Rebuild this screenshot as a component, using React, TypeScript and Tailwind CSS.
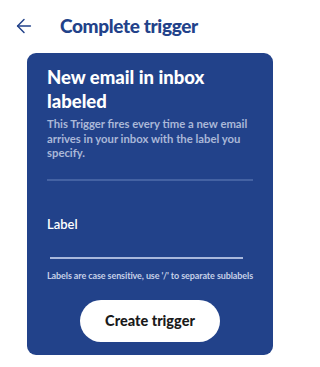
import { ArrowLeft } from "lucide-react";

const font = { fontFamily: "Lato, 'Open Sans', sans-serif" };

export default function App() {
  return (
    <div className="w-[300px] h-[367px] bg-white" style={font}>
      {/* header */}
      <div className="flex items-center h-[49px] pl-[13px] pt-[3px]">
        <ArrowLeft className="w-[22px] h-[22px] text-[#22428a]" strokeWidth={1.6} />
        <h1 className="ml-[25px] text-[19px] font-black text-[#22428a] tracking-[-0.35px]">
          Complete trigger
        </h1>
      </div>

      {/* card */}
      <div className="mx-[27px] mt-[4px] rounded-[9px] bg-[#22428a] px-[20px] pt-[12px] pb-[13px]">
        <h2 className="text-[18.5px] leading-[24px] font-black text-white">
          New email in inbox labeled
        </h2>
        <p className="mt-[4px] text-[11.3px] leading-[14.5px] font-bold text-[#aab8d8]">
          This Trigger fires every time a new email arrives in your inbox with the label you
          specify.
        </p>
        <div className="mt-[18px] h-[2px] bg-[#4462a3]" />

        <div className="mt-[34px] text-[13px] font-semibold text-white">Label</div>
        <div className="mt-[23px] ml-[3px] mr-[10px] h-[1.5px] bg-[#a9b8dc]" />
        <p className="mt-[10px] text-center text-[9px] font-bold text-[#c6d0e8] whitespace-nowrap tracking-[-0.1px]">
          Labels are case sensitive, use '/' to separate sublabels
        </p>

        <div className="mt-[18px] flex justify-center">
          <button className="w-[140px] h-[42px] rounded-full bg-white text-[14.5px] font-black text-[#1a1a1a]">
            Create trigger
          </button>
        </div>
      </div>
    </div>
  );
}
